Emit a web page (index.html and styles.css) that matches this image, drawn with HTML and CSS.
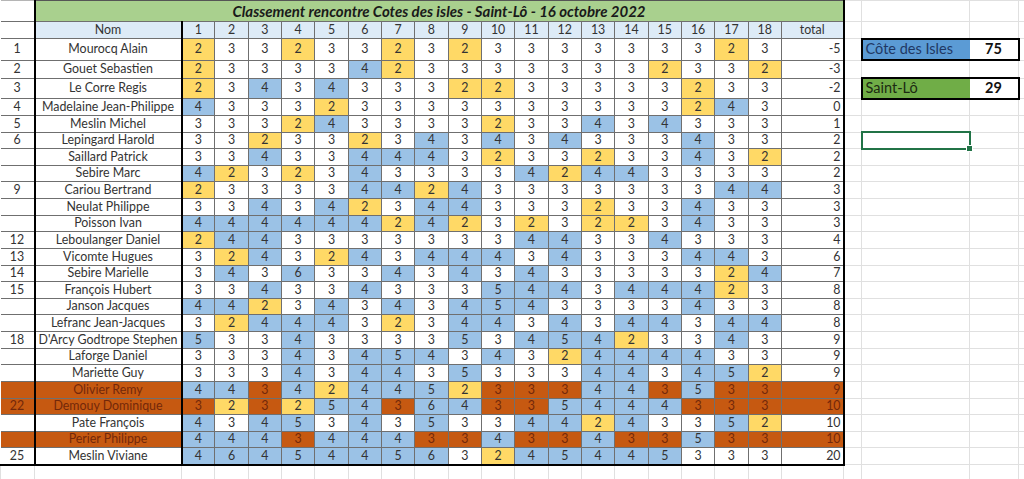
FILE: index.html
```html
<!DOCTYPE html>
<html lang="fr">
<head>
<meta charset="utf-8">
<title>Classement rencontre Cotes des isles - Saint-Lô</title>
<link rel="stylesheet" href="styles.css">
</head>
<body>
<table class="sheet">
<colgroup>
<col class="c-rk"><col class="c-nm">
<col class="c-h"><col class="c-h"><col class="c-h"><col class="c-h"><col class="c-h"><col class="c-h"><col class="c-h"><col class="c-h"><col class="c-h">
<col class="c-h"><col class="c-h"><col class="c-h"><col class="c-h"><col class="c-h"><col class="c-h"><col class="c-h"><col class="c-h"><col class="c-h">
<col class="c-tot"><col class="c-sp"><col class="c-p1"><col class="c-p2"><col class="c-rest">
</colgroup>
<tr class="t"><td class="rk top"></td><td class="ttl" colspan="20">Classement rencontre Cotes des isles - Saint-Lô - 16 octobre 2022</td><td class="g top"></td><td class="g top"></td><td class="g top"></td><td class="g top"></td></tr>
<tr class="hd"><td class="rk"></td><td class="nm">Nom</td><td>1</td><td>2</td><td>3</td><td>4</td><td>5</td><td>6</td><td>7</td><td>8</td><td>9</td><td>10</td><td>11</td><td>12</td><td>13</td><td>14</td><td>15</td><td>16</td><td>17</td><td>18</td><td class="tot ctr">total</td><td class="g"></td><td class="g"></td><td class="g"></td><td class="g"></td></tr>
<tr class="r1"><td class="rk">1</td><td class="nm">Mourocq Alain</td><td class="y">2</td><td>3</td><td>3</td><td class="y">2</td><td>3</td><td>3</td><td class="y">2</td><td>3</td><td class="y">2</td><td>3</td><td>3</td><td>3</td><td>3</td><td>3</td><td>3</td><td>3</td><td class="y">2</td><td>3</td><td class="tot">-5</td><td class="g"></td><td class="bx bxl blu">Côte des Isles</td><td class="bx bxr">75</td><td class="g"></td></tr>
<tr class="r2"><td class="rk">2</td><td class="nm">Gouet Sebastien</td><td class="y">2</td><td>3</td><td>3</td><td>3</td><td>3</td><td class="b">4</td><td class="y">2</td><td>3</td><td>3</td><td>3</td><td>3</td><td>3</td><td>3</td><td>3</td><td class="y">2</td><td>3</td><td>3</td><td class="y">2</td><td class="tot">-3</td><td class="g"></td><td class="g"></td><td class="g"></td><td class="g"></td></tr>
<tr class="r3"><td class="rk">3</td><td class="nm">Le Corre Regis</td><td class="y">2</td><td>3</td><td class="b">4</td><td>3</td><td class="b">4</td><td>3</td><td>3</td><td>3</td><td class="y">2</td><td class="y">2</td><td>3</td><td>3</td><td>3</td><td>3</td><td>3</td><td class="y">2</td><td>3</td><td>3</td><td class="tot">-2</td><td class="g"></td><td class="bx bxl grn">Saint-Lô</td><td class="bx bxr">29</td><td class="g"></td></tr>
<tr class="r"><td class="rk">4</td><td class="nm">Madelaine Jean-Philippe</td><td class="b">4</td><td>3</td><td>3</td><td>3</td><td class="y">2</td><td>3</td><td>3</td><td>3</td><td>3</td><td>3</td><td>3</td><td>3</td><td>3</td><td>3</td><td>3</td><td class="y">2</td><td class="b">4</td><td>3</td><td class="tot">0</td><td class="g"></td><td class="g"></td><td class="g"></td><td class="g"></td></tr>
<tr class="r"><td class="rk">5</td><td class="nm">Meslin Michel</td><td>3</td><td>3</td><td>3</td><td class="y">2</td><td class="b">4</td><td>3</td><td>3</td><td>3</td><td>3</td><td class="y">2</td><td>3</td><td>3</td><td class="b">4</td><td>3</td><td class="b">4</td><td>3</td><td>3</td><td>3</td><td class="tot">1</td><td class="g"></td><td class="g"></td><td class="g"></td><td class="g"></td></tr>
<tr class="r"><td class="rk">6</td><td class="nm">Lepingard Harold</td><td>3</td><td>3</td><td class="y">2</td><td>3</td><td>3</td><td class="y">2</td><td>3</td><td class="b">4</td><td>3</td><td class="b">4</td><td>3</td><td class="b">4</td><td>3</td><td>3</td><td>3</td><td class="b">4</td><td>3</td><td>3</td><td class="tot">2</td><td class="g"></td><td class="sel"><span class="handle"></span></td><td class="g"></td><td class="g"></td></tr>
<tr class="r"><td class="rk"></td><td class="nm">Saillard Patrick</td><td>3</td><td>3</td><td class="b">4</td><td>3</td><td>3</td><td class="b">4</td><td class="b">4</td><td class="b">4</td><td>3</td><td class="y">2</td><td>3</td><td>3</td><td class="y">2</td><td>3</td><td>3</td><td class="b">4</td><td>3</td><td class="y">2</td><td class="tot">2</td><td class="g"></td><td class="g"></td><td class="g"></td><td class="g"></td></tr>
<tr class="r"><td class="rk"></td><td class="nm">Sebire Marc</td><td class="b">4</td><td class="y">2</td><td>3</td><td class="y">2</td><td>3</td><td class="b">4</td><td>3</td><td>3</td><td>3</td><td>3</td><td class="b">4</td><td class="y">2</td><td class="b">4</td><td class="b">4</td><td>3</td><td>3</td><td>3</td><td>3</td><td class="tot">2</td><td class="g"></td><td class="g"></td><td class="g"></td><td class="g"></td></tr>
<tr class="r"><td class="rk">9</td><td class="nm">Cariou Bertrand</td><td class="y">2</td><td>3</td><td>3</td><td>3</td><td>3</td><td class="b">4</td><td class="b">4</td><td class="y">2</td><td class="b">4</td><td>3</td><td>3</td><td>3</td><td>3</td><td>3</td><td>3</td><td>3</td><td class="b">4</td><td class="b">4</td><td class="tot">3</td><td class="g"></td><td class="g"></td><td class="g"></td><td class="g"></td></tr>
<tr class="r"><td class="rk"></td><td class="nm">Neulat Philippe</td><td>3</td><td>3</td><td class="b">4</td><td>3</td><td class="b">4</td><td class="y">2</td><td>3</td><td class="b">4</td><td class="b">4</td><td>3</td><td>3</td><td>3</td><td class="y">2</td><td>3</td><td>3</td><td class="b">4</td><td>3</td><td>3</td><td class="tot">3</td><td class="g"></td><td class="g"></td><td class="g"></td><td class="g"></td></tr>
<tr class="r"><td class="rk"></td><td class="nm">Poisson Ivan</td><td class="b">4</td><td class="b">4</td><td class="b">4</td><td class="b">4</td><td class="b">4</td><td class="b">4</td><td class="y">2</td><td class="b">4</td><td class="y">2</td><td>3</td><td class="y">2</td><td>3</td><td class="y">2</td><td class="y">2</td><td>3</td><td class="b">4</td><td>3</td><td>3</td><td class="tot">3</td><td class="g"></td><td class="g"></td><td class="g"></td><td class="g"></td></tr>
<tr class="r"><td class="rk">12</td><td class="nm">Leboulanger Daniel</td><td class="y">2</td><td class="b">4</td><td class="b">4</td><td>3</td><td>3</td><td>3</td><td>3</td><td>3</td><td>3</td><td>3</td><td class="b">4</td><td class="b">4</td><td>3</td><td>3</td><td class="b">4</td><td>3</td><td>3</td><td>3</td><td class="tot">4</td><td class="g"></td><td class="g"></td><td class="g"></td><td class="g"></td></tr>
<tr class="r"><td class="rk">13</td><td class="nm">Vicomte Hugues</td><td>3</td><td class="y">2</td><td class="b">4</td><td>3</td><td class="y">2</td><td class="b">4</td><td>3</td><td class="b">4</td><td class="b">4</td><td class="b">4</td><td>3</td><td class="b">4</td><td>3</td><td>3</td><td>3</td><td class="b">4</td><td class="b">4</td><td>3</td><td class="tot">6</td><td class="g"></td><td class="g"></td><td class="g"></td><td class="g"></td></tr>
<tr class="r"><td class="rk">14</td><td class="nm">Sebire Marielle</td><td>3</td><td class="b">4</td><td>3</td><td class="b">6</td><td>3</td><td>3</td><td class="b">4</td><td>3</td><td class="b">4</td><td>3</td><td class="b">4</td><td>3</td><td>3</td><td>3</td><td>3</td><td>3</td><td class="y">2</td><td class="b">4</td><td class="tot">7</td><td class="g"></td><td class="g"></td><td class="g"></td><td class="g"></td></tr>
<tr class="r"><td class="rk">15</td><td class="nm">François Hubert</td><td>3</td><td>3</td><td class="b">4</td><td>3</td><td>3</td><td class="b">4</td><td>3</td><td>3</td><td>3</td><td class="b">5</td><td class="b">4</td><td class="b">4</td><td>3</td><td class="b">4</td><td class="b">4</td><td class="b">4</td><td class="y">2</td><td>3</td><td class="tot">8</td><td class="g"></td><td class="g"></td><td class="g"></td><td class="g"></td></tr>
<tr class="r"><td class="rk"></td><td class="nm">Janson Jacques</td><td class="b">4</td><td class="b">4</td><td class="y">2</td><td>3</td><td class="b">4</td><td>3</td><td class="b">4</td><td>3</td><td class="b">4</td><td class="b">5</td><td class="b">4</td><td>3</td><td>3</td><td>3</td><td>3</td><td class="b">4</td><td>3</td><td>3</td><td class="tot">8</td><td class="g"></td><td class="g"></td><td class="g"></td><td class="g"></td></tr>
<tr class="r"><td class="rk"></td><td class="nm">Lefranc Jean-Jacques</td><td>3</td><td class="y">2</td><td class="b">4</td><td class="b">4</td><td class="b">4</td><td>3</td><td class="y">2</td><td>3</td><td class="b">4</td><td class="b">4</td><td>3</td><td class="b">4</td><td>3</td><td class="b">4</td><td class="b">4</td><td>3</td><td class="b">4</td><td class="b">4</td><td class="tot">8</td><td class="g"></td><td class="g"></td><td class="g"></td><td class="g"></td></tr>
<tr class="r"><td class="rk">18</td><td class="nm">D'Arcy Godtrope Stephen</td><td class="b">5</td><td>3</td><td>3</td><td class="b">4</td><td>3</td><td>3</td><td>3</td><td>3</td><td class="b">5</td><td>3</td><td class="b">4</td><td class="b">5</td><td class="b">4</td><td class="y">2</td><td>3</td><td>3</td><td class="b">4</td><td>3</td><td class="tot">9</td><td class="g"></td><td class="g"></td><td class="g"></td><td class="g"></td></tr>
<tr class="r"><td class="rk"></td><td class="nm">Laforge Daniel</td><td>3</td><td>3</td><td>3</td><td class="b">4</td><td>3</td><td class="b">4</td><td class="b">5</td><td class="b">4</td><td>3</td><td class="b">4</td><td>3</td><td class="y">2</td><td class="b">4</td><td class="b">4</td><td class="b">4</td><td class="b">4</td><td>3</td><td>3</td><td class="tot">9</td><td class="g"></td><td class="g"></td><td class="g"></td><td class="g"></td></tr>
<tr class="r"><td class="rk"></td><td class="nm">Mariette Guy</td><td>3</td><td>3</td><td>3</td><td class="b">4</td><td>3</td><td class="b">4</td><td class="b">4</td><td>3</td><td class="b">5</td><td>3</td><td>3</td><td>3</td><td class="b">4</td><td class="b">4</td><td>3</td><td class="b">4</td><td class="b">5</td><td class="y">2</td><td class="tot">9</td><td class="g"></td><td class="g"></td><td class="g"></td><td class="g"></td></tr>
<tr class="r hl"><td class="rk"></td><td class="nm">Olivier Remy</td><td class="b">4</td><td class="b">4</td><td class="o">3</td><td class="b">4</td><td class="y">2</td><td class="b">4</td><td class="b">4</td><td class="b">5</td><td class="y">2</td><td class="o">3</td><td class="o">3</td><td class="o">3</td><td class="b">4</td><td class="b">4</td><td class="o">3</td><td class="b">5</td><td class="o">3</td><td class="o">3</td><td class="tot">9</td><td class="g"></td><td class="g"></td><td class="g"></td><td class="g"></td></tr>
<tr class="r hl"><td class="rk">22</td><td class="nm">Demouy Dominique</td><td class="o">3</td><td class="y">2</td><td class="o">3</td><td class="y">2</td><td class="b">5</td><td class="b">4</td><td class="o">3</td><td class="b">6</td><td class="b">4</td><td class="o">3</td><td class="o">3</td><td class="b">5</td><td class="b">4</td><td class="b">4</td><td class="b">4</td><td class="o">3</td><td class="o">3</td><td class="o">3</td><td class="tot">10</td><td class="g"></td><td class="g"></td><td class="g"></td><td class="g"></td></tr>
<tr class="r"><td class="rk"></td><td class="nm">Pate François</td><td class="b">4</td><td>3</td><td class="b">4</td><td class="b">5</td><td>3</td><td class="b">4</td><td>3</td><td class="b">5</td><td>3</td><td>3</td><td class="b">4</td><td class="b">4</td><td class="y">2</td><td class="b">4</td><td>3</td><td>3</td><td class="b">5</td><td class="y">2</td><td class="tot">10</td><td class="g"></td><td class="g"></td><td class="g"></td><td class="g"></td></tr>
<tr class="r hl"><td class="rk"></td><td class="nm">Perier Philippe</td><td class="b">4</td><td class="b">4</td><td class="b">4</td><td class="o">3</td><td class="b">4</td><td class="b">4</td><td class="b">4</td><td class="o">3</td><td class="o">3</td><td class="b">4</td><td class="o">3</td><td class="o">3</td><td class="b">4</td><td class="o">3</td><td class="o">3</td><td class="b">5</td><td class="o">3</td><td class="o">3</td><td class="tot">10</td><td class="g"></td><td class="g"></td><td class="g"></td><td class="g"></td></tr>
<tr class="r last"><td class="rk">25</td><td class="nm">Meslin Viviane</td><td class="b">4</td><td class="b">6</td><td class="b">4</td><td class="b">5</td><td class="b">4</td><td class="b">4</td><td class="b">5</td><td class="b">6</td><td>3</td><td class="y">2</td><td class="b">4</td><td class="b">5</td><td class="b">4</td><td class="b">4</td><td class="b">5</td><td>3</td><td>3</td><td>3</td><td class="tot">20</td><td class="g"></td><td class="g"></td><td class="g"></td><td class="g"></td></tr>
<tr class="end"><td class="g"></td><td class="g"></td><td class="g"></td><td class="g"></td><td class="g"></td><td class="g"></td><td class="g"></td><td class="g"></td><td class="g"></td><td class="g"></td><td class="g"></td><td class="g"></td><td class="g"></td><td class="g"></td><td class="g"></td><td class="g"></td><td class="g"></td><td class="g"></td><td class="g"></td><td class="g"></td><td class="g"></td><td class="g"></td><td class="g"></td><td class="g"></td><td class="g"></td></tr>
</table>
</body>
</html>
```

FILE: styles.css
```css
html, body {
  margin: 0;
  padding: 0;
  background: #ffffff;
}

body {
  font-family: "Lato", "Noto Sans", sans-serif;
  font-size: 12.4px;
  color: #333333;
  overflow: hidden;
}

.sheet {
  border-collapse: collapse;
  table-layout: fixed;
  width: 1024px;
}

.c-rk { width: 34px; }
.c-nm { width: 147px; }
.c-h { width: 33.333px; }
.c-tot { width: 62px; }
.c-sp { width: 18px; }
.c-p1 { width: 108px; }
.c-p2 { width: 49px; }
.c-rest { width: 6px; }

.sheet td {
  padding: 0;
  border: 1px solid #6f6f6f;
  text-align: center;
  white-space: nowrap;
  overflow: hidden;
  line-height: 1;
}

tr.t { height: 21px; }
tr.hd { height: 17px; }
tr.r1 { height: 21.6px; }
tr.r2 { height: 18.4px; }
tr.r3 { height: 20.3px; }
tr.r { height: 16.64px; }
tr.end { height: 20px; }

.sheet td.rk {
  border-left: none;
  background: #ffffff;
}

.sheet td.top {
  border-top: 1px solid #b5b5b5;
}

.sheet td.nm {
  border-left: 2px solid #000000;
  border-right: 2px solid #000000;
}

.sheet td.tot {
  border-right: 2px solid #000000;
  text-align: right;
  padding-right: 2px;
}

.sheet td.tot.ctr {
  text-align: center;
  padding-right: 0;
}

.sheet td.ttl {
  background: #a9d08e;
  color: #1a1a1a;
  font-weight: bold;
  font-style: italic;
  font-size: 15px;
  border-left: 2px solid #000000;
  border-right: 2px solid #000000;
  border-top: 1px solid #555555;
}

.hd td {
  background: #ddebf7;
}

.sheet td.g {
  border: 1px solid #e0e0e0;
  background: #ffffff;
}

.last td {
  border-bottom: 2px solid #000000;
}

.sheet .last td.g {
  border-bottom: 1px solid #e0e0e0;
}

.sheet td.y { background: #ffd966; }
.sheet td.b { background: #9bc2e6; }
.sheet td.o { background: #c65911; color: #73280a; }

.hl td.rk,
.hl td.nm,
.hl td.tot {
  background: #c65911;
  color: #73280a;
}

.sheet td.bx {
  border: 2px solid #000000;
  font-size: 14.5px;
}

.sheet td.bxl {
  text-align: left;
  padding-left: 3px;
  border-right-style: hidden;
}

.sheet td.bxr {
  border-left-style: hidden;
  font-weight: bold;
  color: #111111;
}

.sheet td.blu {
  background: #5b9bd5;
  color: #1f3864;
}

.sheet td.grn {
  background: #70ad47;
  color: #1c2a12;
}

.sheet td.sel {
  border: 2px solid #217346;
  position: relative;
  overflow: visible;
}

.handle {
  position: absolute;
  right: -4px;
  bottom: -4px;
  width: 5px;
  height: 5px;
  background: #217346;
  border: 1px solid #ffffff;
}
```
